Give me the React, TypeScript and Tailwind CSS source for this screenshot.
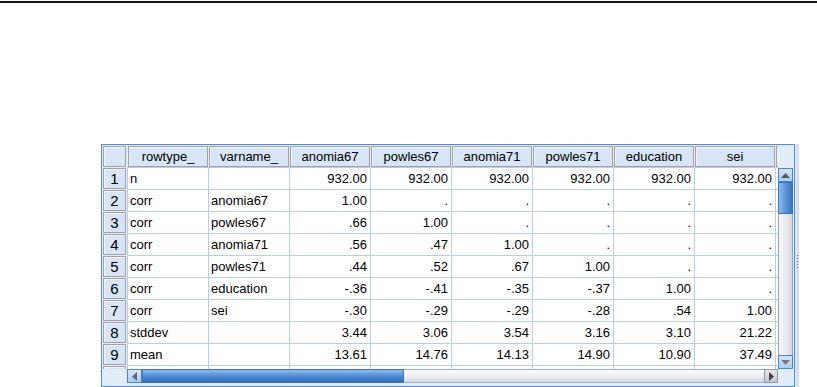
const columns = ["rowtype_", "varname_", "anomia67", "powles67", "anomia71", "powles71", "education", "sei", ""];

// first two columns are text, the rest numbers; "" stays empty
const rows: string[][] = [
  ["n", "", "932.00", "932.00", "932.00", "932.00", "932.00", "932.00"],
  ["corr", "anomia67", "1.00", ".", ".", ".", ".", "."],
  ["corr", "powles67", ".66", "1.00", ".", ".", ".", "."],
  ["corr", "anomia71", ".56", ".47", "1.00", ".", ".", "."],
  ["corr", "powles71", ".44", ".52", ".67", "1.00", ".", "."],
  ["corr", "education", "-.36", "-.41", "-.35", "-.37", "1.00", "."],
  ["corr", "sei", "-.30", "-.29", "-.29", "-.28", ".54", "1.00"],
  ["stddev", "", "3.44", "3.06", "3.54", "3.16", "3.10", "21.22"],
  ["mean", "", "13.61", "14.76", "14.13", "14.90", "10.90", "37.49"],
  ["", "", "", "", "", "", "", ""],
];

function Arrow({ dir, color = "#5a5a5a" }: { dir: "up" | "down" | "left" | "right"; color?: string }) {
  const pts = {
    up: "0,5 4.5,0 9,5",
    down: "0,0 9,0 4.5,5",
    left: "5,0 5,9 0,4.5",
    right: "0,0 0,9 5,4.5",
  }[dir];
  const vertical = dir === "up" || dir === "down";
  return (
    <svg width={vertical ? 9 : 5} height={vertical ? 5 : 9} viewBox={vertical ? "0 0 9 5" : "0 0 5 9"}>
      <polygon points={pts} fill={color} />
    </svg>
  );
}

function HeaderBox({ children, className = "" }: { children?: React.ReactNode; className?: string }) {
  return (
    <div className={`flex h-[21px] shrink-0 items-center justify-center border border-[#a2a2a2] bg-[#d7e5f6] leading-none shadow-[inset_1px_1px_0_#eef5fd] ${className}`}>
      {children}
    </div>
  );
}

function VScrollbar() {
  return (
    <div className="flex h-[201px] w-[15px] flex-col">
      <div className="flex h-[14px] items-center justify-center border border-[#4a86cf] bg-gradient-to-b from-[#d3e6fa] to-[#a9cdf1]">
        <Arrow dir="up" />
      </div>
      <div className="h-[32px] border border-[#3a74bd] bg-gradient-to-r from-[#8dbbec] via-[#5a95da] to-[#3b77c6]" />
      <div className="flex-1 border-x border-[#8fa6c4] bg-gradient-to-r from-[#f7f7fa] via-[#ebecf1] to-[#d2d5de]" />
      <div className="flex h-[14px] items-center justify-center border border-[#4a86cf] bg-gradient-to-b from-[#d3e6fa] to-[#a9cdf1]">
        <Arrow dir="down" color="#7a7a7a" />
      </div>
    </div>
  );
}

function HScrollbar() {
  return (
    <div className="flex h-[14px] w-[651px]">
      <div className="flex w-[15px] items-center justify-center border border-[#4a86cf] bg-gradient-to-b from-[#d3e6fa] to-[#a9cdf1]">
        <Arrow dir="left" color="#666" />
      </div>
      <div className="w-[262px] border border-[#3a74bd] bg-gradient-to-b from-[#8dbbec] via-[#4f8dd6] to-[#2f6cbd]" />
      <div className="flex-1 border-y border-[#9aaecb] bg-gradient-to-b from-[#fbfbfc] via-[#eeeff3] to-[#d6d8df]" />
      <div className="flex w-[14px] items-center justify-center border border-[#8e97a8] bg-gradient-to-b from-[#e8e9ee] to-[#c3c6cf]">
        <Arrow dir="right" color="#444" />
      </div>
    </div>
  );
}

export default function App() {
  return (
    <div className="h-[387px] w-[817px] overflow-hidden bg-white font-['Liberation_Sans',Arial,sans-serif] text-[13px] text-black">
      <div className="mt-px h-[2px] bg-[#141414]" />

      <div className="ml-[101px] mt-[141px] flex">
        <div className="flex w-[694px] border border-[#4d8cd6] bg-[#e3edf9] px-px pb-[3px] pt-px">
          {/* row numbers */}
          <div className="flex w-[23px] flex-col">
            <div className="flex h-[223px] flex-col overflow-hidden text-[15px]">
              <HeaderBox />
              {rows.map((_, i) => (
                <HeaderBox key={i} className="mt-px">{i < 9 ? i + 1 : ""}</HeaderBox>
              ))}
            </div>
          </div>

          <div className="w-px" />

          {/* data viewport */}
          <div className="flex w-[651px] flex-col overflow-hidden">
            <div className="flex h-[21px] pl-px">
              {columns.map((c, i) => (
                <HeaderBox key={i} className="mr-px w-[80px]">{c}</HeaderBox>
              ))}
            </div>
            <div className="h-[202px] overflow-hidden border-l border-t border-[#b7cde8] bg-white">
              {rows.map((r, ri) => (
                <div key={ri} className="flex h-[22px]">
                  {r.map((v, ci) => (
                    <div
                      key={ci}
                      className={`flex w-[81px] shrink-0 items-center border-b border-r border-[#b7cde8] ${
                        ci < 2 ? "justify-start pl-[2px]" : "justify-end pr-[3px]"
                      }`}
                    >
                      {v}
                    </div>
                  ))}
                  <div className="w-[81px] shrink-0 border-b border-[#b7cde8]" />
                </div>
              ))}
            </div>
            <HScrollbar />
          </div>

          {/* vertical scrollbar */}
          <div className="flex w-[15px] flex-col pt-[22px]">
            <VScrollbar />
          </div>
        </div>

        {/* pane splitter */}
        <div className="flex h-[243px] w-[4px] flex-col items-center bg-gradient-to-r from-[#e4eaf3] to-[#cfd8e6] pt-[111px]">
          {[0, 1, 2, 3, 4].map((d) => (
            <div key={d} className="mb-[2px] h-px w-px bg-[#5d6878]" />
          ))}
        </div>
      </div>
    </div>
  );
}
